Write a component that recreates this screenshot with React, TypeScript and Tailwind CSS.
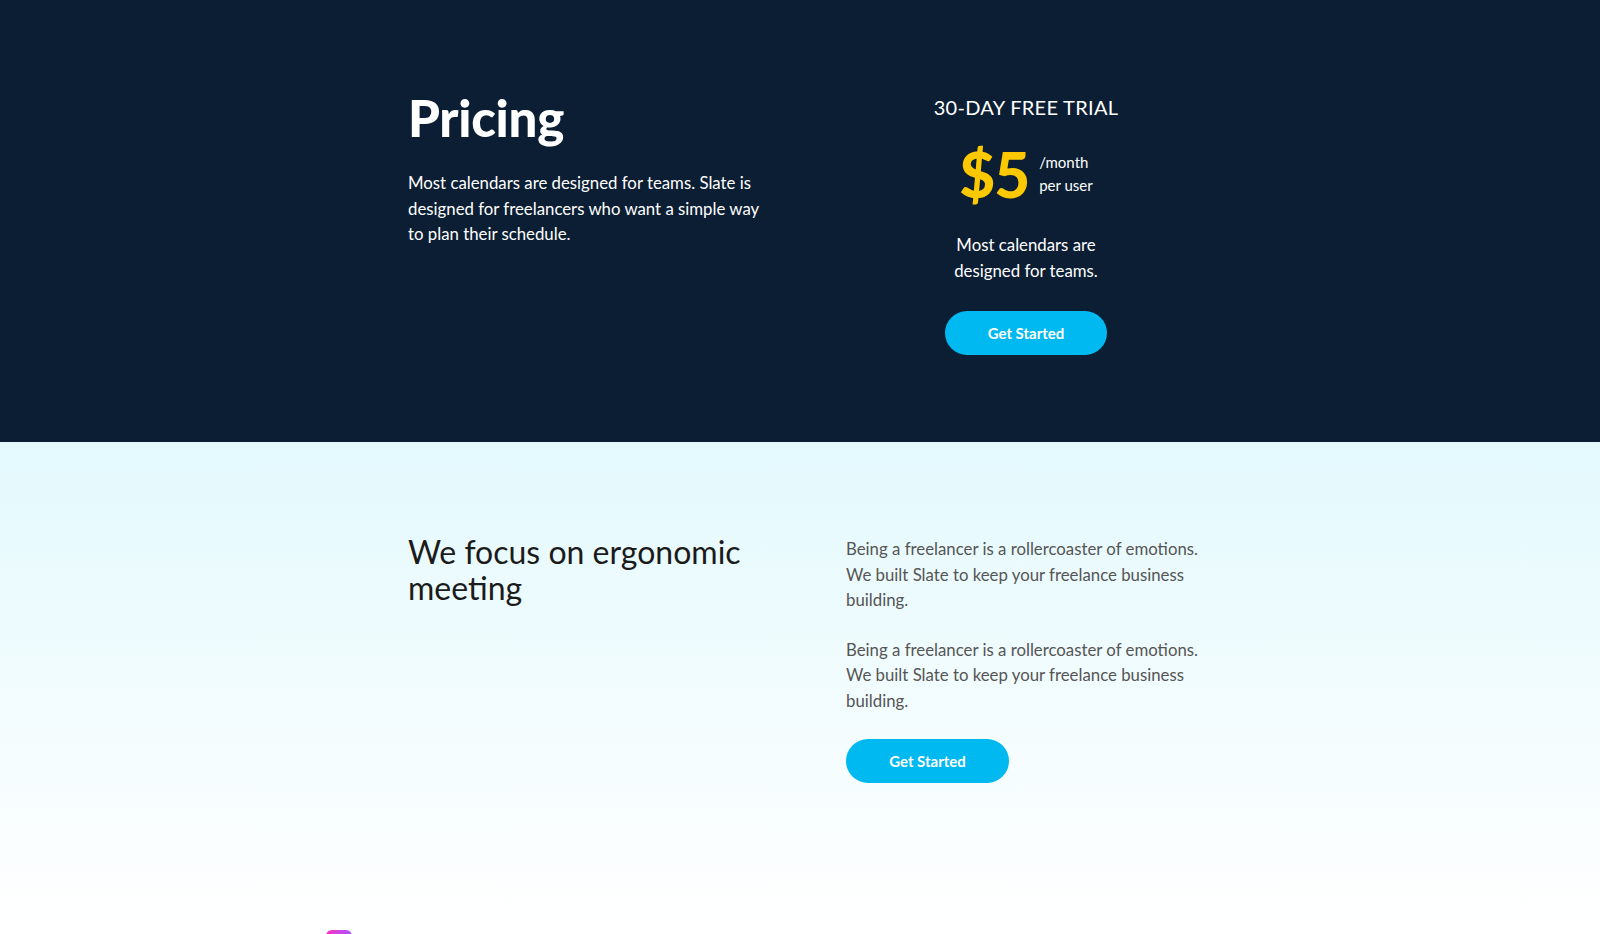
export default function App() {
  return (
    <div className="min-h-screen bg-white font-['Lato',sans-serif] overflow-hidden">
      {/* Pricing */}
      <section className="h-[442px] bg-[#0b1e33] pt-[84px]">
        <div className="w-[784px] mx-auto flex">
          <div className="w-[438px] shrink-0">
            <h2 className="mt-[5px] text-[51px] leading-[58px] font-black text-white tracking-[-0.3px]">Pricing</h2>
            <p className="mt-[23px] w-[360px] text-[16.8px] leading-[25.5px] text-white">
              Most calendars are designed for teams. Slate is designed for freelancers who want a simple way to plan their schedule.
            </p>
          </div>
          <div className="w-[354px] shrink-0 flex flex-col items-center pt-[10px] pl-[6px]">
            <div className="text-[20px] leading-[26px] text-white tracking-[0.3px]">30-DAY FREE TRIAL</div>
            <div className="mt-[24px] flex items-center gap-[10px]">
              <span className="text-[62px] leading-[60px] font-black text-[#fcc800] tracking-[-1px]">$5</span>
              <div className="flex flex-col text-[15px] leading-[23px] text-white">
                <span>/month</span>
                <span>per user</span>
              </div>
            </div>
            <p className="mt-[28px] w-[160px] text-center text-[16.8px] leading-[25.5px] text-white">
              Most calendars are designed for teams.
            </p>
            <button className="mt-[28px] w-[162px] h-[44px] rounded-full bg-[#00b9f1] text-white text-[15px] font-bold">
              Get Started
            </button>
          </div>
        </div>
      </section>

      {/* Ergonomic */}
      <section className="h-[488px] bg-gradient-to-b from-[#e3f9fd] to-white pt-[92px]">
        <div className="w-[784px] mx-auto flex">
          <div className="w-[438px] shrink-0">
            <h3 className="w-[380px] text-[32px] leading-[36px] text-[#1b1b1b]">We focus on ergonomic meeting</h3>
          </div>
          <div className="w-[354px] shrink-0 pt-[2px]">
            <p className="text-[16.8px] leading-[25.5px] text-[#555]">
              Being a freelancer is a rollercoaster of emotions. We built Slate to keep your freelance business building.
            </p>
            <p className="mt-[24px] text-[16.8px] leading-[25.5px] text-[#555]">
              Being a freelancer is a rollercoaster of emotions. We built Slate to keep your freelance business building.
            </p>
            <button className="mt-[26px] w-[163px] h-[44px] rounded-full bg-[#00b9f1] text-white text-[15px] font-bold">
              Get Started
            </button>
          </div>
        </div>
      </section>

      {/* Next section */}
      <section className="h-[200px] bg-white">
        <div className="pl-[326px]">
          <div className="w-[26px] h-[26px] rounded-[6px] bg-gradient-to-r from-[#ff1fc4] to-[#a64dff]"></div>
        </div>
      </section>
    </div>
  );
}
